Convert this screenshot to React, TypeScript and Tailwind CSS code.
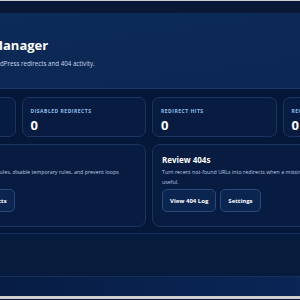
import React from 'react';

type Stat = { label: string; value: string };

const stats: Stat[] = [
  { label: 'Active Redirects', value: '0' },
  { label: 'Disabled Redirects', value: '0' },
  { label: 'Redirect Hits', value: '0' },
  { label: 'Recent 404s', value: '0' },
];

const ActionButton: React.FC<{ children: React.ReactNode }> = ({ children }) => (
  <button className="h-[23px] rounded-[5px] border border-[#294a7b] bg-[#0a2550] px-[7px] text-[6px] font-bold leading-none text-white">
    {children}
  </button>
);

const ActionCard: React.FC<{ title: string; description: React.ReactNode; actions: string[] }> = ({
  title,
  description,
  actions,
}) => (
  <div className="flex h-[83px] flex-col rounded-[8px] border border-[#1a355f] bg-[#071c40] px-[9px] pt-[10px] pb-[14px]">
    <h3 className="text-[8px] font-bold leading-[10px] text-white">{title}</h3>
    <p className="mt-[3px] text-[5.3px] leading-[9.5px] text-[#b9c9e0]">{description}</p>
    <div className="mt-auto flex gap-[4px]">
      {actions.map((action) => (
        <ActionButton key={action}>{action}</ActionButton>
      ))}
    </div>
  </div>
);

export default function App() {
  return (
    <div className="h-[300px] w-[300px] overflow-hidden bg-[#06183a] font-['Open_Sans',sans-serif]">
      <div className="h-px bg-[#cfcfcf]" />
      <div className="h-[12px] bg-[#091837]" />

      <div className="ml-[-125px] w-[548px]">
        <header className="h-[76px] border-b border-[#1a3766] bg-gradient-to-br from-[#0d2c5a] to-[#0b2551] pl-[58px] pt-[24px]">
          <h1 className="text-[13px] font-bold leading-[16px] text-white">Redirect Manager</h1>
          <p className="mt-[6px] text-[6.2px] leading-[9px] text-[#c9d6ea]">
            Manage all of your WordPress redirects and 404 activity.
          </p>
        </header>

        <div className="px-4 pt-[8px]">
          <div className="grid grid-cols-4 gap-[6px]">
            {stats.map((stat) => (
              <div
                key={stat.label}
                className="h-[40px] rounded-[7px] border border-[#1a355f] bg-[#071c40] px-[8px] pt-[10px]"
              >
                <p className="text-[5px] font-bold uppercase leading-[6px] tracking-[0.1em] text-[#8fc3f0]">
                  {stat.label}
                </p>
                <p className="mt-[5px] text-[13px] font-bold leading-[13px] text-white">{stat.value}</p>
              </div>
            ))}
          </div>

          <div className="mt-[7px] grid grid-cols-2 gap-[6px]">
            <ActionCard
              title="Manage Redirects"
              description="Review and clean up outdated redirect rules, disable temporary rules, and prevent loops"
              actions={['New Redirect', 'All Redirects']}
            />
            <ActionCard
              title="Review 404s"
              description={
                <>
                  Turn recent not-found URLs into redirects when a missing page has a clear replacement that is
                  <br />
                  useful.
                </>
              }
              actions={['View 404 Log', 'Settings']}
            />
          </div>
        </div>
      </div>

      <div className="mt-[6px] h-[44px] border-y border-[#15305a] bg-[#071b3d]" />
      <div className="h-[19px] bg-gradient-to-r from-[#071d45] to-[#0a2656]" />
      <div className="h-[3px] bg-[#cfcfcf]" />
    </div>
  );
}
